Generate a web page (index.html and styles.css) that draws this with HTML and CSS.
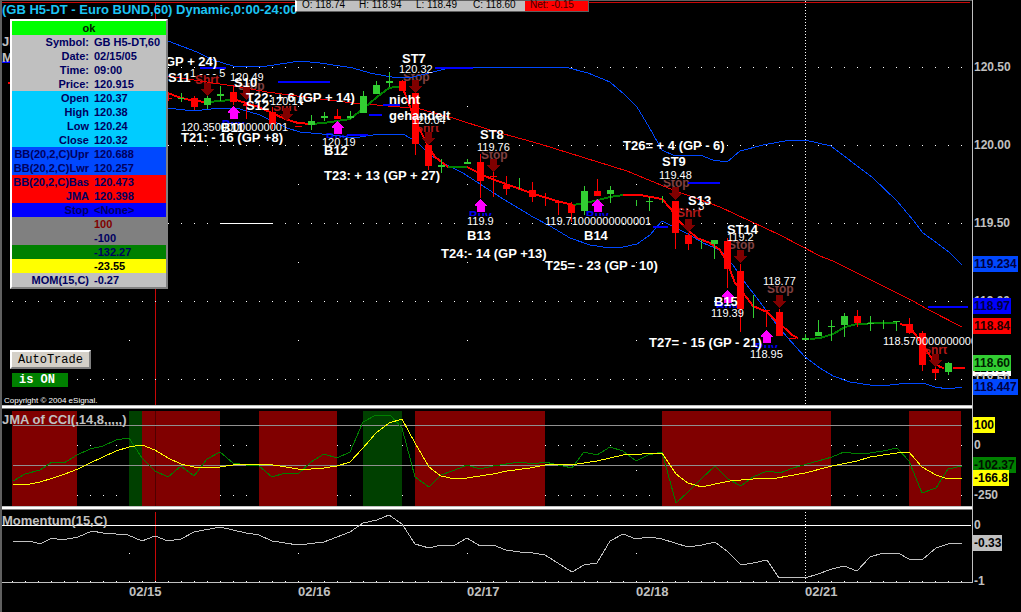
FILE: index.html
```html
<!DOCTYPE html>
<html lang="en">

<head>
    <meta charset="UTF-8">
    <meta name="viewport" content="width=device-width, initial-scale=1.0">
    <title>GB H5-DT - Euro BUND, 60</title>
    <link rel="stylesheet" href="styles.css">
</head>

<body>
    <main class="workspace">
        <section class="pane price-pane">
            <svg class="plot" viewBox="2 0 970 405">
                <path class="top-edge" d="M2 0.5H972" />
                <path class="cross" d="M2 2.5H970M155.5 2V405" />
                <path class="session" d="M805.5 1V405" />
                <path class="dots" d="M12 67.5H972M12 145.5H972M12 223.5H972M12 301.5H972M12 379.5H972" />
                <path class="day-dots" d="M298 106.5H806M298 184.5H806M298 262.5H806M129 340.5H806" />

                <g id="signals"></g>

                <path class="line band" d="M168 41L197 52L213 60L233 66L267 66L300 61L320 63L340 66L353 68L370 73L397 78L413 77L433 72L453 67L473 67L565 67L588 73L610 82L625 95L637 107L649 127L662 150L675 156L700 155L713 160L727 162L740 151L763 145L790 140L805 140L831 146L848 159L872 177L897 201L913 220L923 233L937 243L950 253L962 265" />
                <path class="line band" d="M168 108L193 111L220 108L240 109L260 115L287 128L300 132L333 135L353 138L373 135L403 134L417 142L430 155L447 165L463 173L480 184L500 197L533 217L550 226L570 238L590 245L610 248L623 247L637 244L650 235L662 221L670 225L688 234L703 243L720 250L733 265L743 280L760 302L773 320L787 337L805 357L820 368L833 376L850 382L870 385L890 385L908 383L923 383L935 387L948 389L962 387" />
                <path class="line basis" d="M168 76L200 81L240 87L267 92L320 99L353 103L400 107L420 109L453 118L493 131L540 144L627 171L673 190L720 207L780 235L820 256L833 261L913 301L927 309L962 327" />
                <path class="stop-line" d="M200 67.5H226M278 81.5H330M383 104.5H400M369 114.5H382M435 67.5H473M347 134.5H368M653 226.5H668M688 182.5H720M928 306.5H968M2 61.5H10" />
                <path class="white-line" d="M220 223.5H273" />

                <path class="jma down" d="M168 93L178 97L194 101L207 102M233 99L246 103L259 107L285 119L298 123L311 124M402 86L415 120L428 146L435 157L448 167M467 167L477 172L487 177L503 183L520 189L537 195L557 201L573 205M623 195L640 195L662 199L671 209L678 220L688 230L697 238L710 243L720 250L727 262L735 283L747 298L753 306L767 312L777 322L787 330L792 335L798 338M900 324L909 326L918 338L926 350L935 363L940 367L944 368M953 368H962M8 83H10" />
                <path class="jma up" d="M207 102L222 101L233 99M311 124L324 123L337 121L350 119L363 109L377 97L389 88L402 86M448 167H467M573 205L590 202L610 197L623 195M810 339L820 338L833 334L845 327L857 324L879 323L896 323" />

                <g id="candles"></g>
                <g id="arrows"></g>

                <g class="quote">
                    <text x="181" y="131">120.35000000000001</text>
                    <text x="190" y="77">1 - - - 5</text>
                    <text x="230" y="81">120.49</text>
                    <text x="270" y="105">120.14</text>
                    <text x="322" y="146">120.19</text>
                    <text x="399" y="73">120.32</text>
                    <text x="412" y="124">120.04</text>
                    <text x="477" y="151">119.76</text>
                    <text x="467" y="225">119.9</text>
                    <text x="545" y="225">119.71000000000001</text>
                    <text x="659" y="179">119.48</text>
                    <text x="680" y="210">. . . 3</text>
                    <text x="727" y="241">119.2</text>
                    <text x="711" y="317">119.39</text>
                    <text x="763" y="285">118.77</text>
                    <text x="750" y="358">118.95</text>
                    <text x="883" y="345">118.57000000000001</text>
                </g>

                <g class="label">
                    <text class="study" x="2" y="46">JMA</text>
                    <text class="study" x="2" y="62">MOM</text>
                    <text x="165" y="66">GP + 24)</text>
                    <text x="168" y="82">S11</text>
                    <text x="234" y="87">S10</text>
                    <text x="246" y="102">T22: + 6 (GP + 14)</text>
                    <text x="246" y="110">S12</text>
                    <text x="221" y="132">B11</text>
                    <text x="181" y="142">T21: - 16 (GP +8)</text>
                    <text x="324" y="155">B12</text>
                    <text x="324" y="180">T23: + 13 (GP + 27)</text>
                    <text x="402" y="63">ST7</text>
                    <text x="389" y="104">nicht</text>
                    <text x="389" y="120">gehandelt</text>
                    <text x="480" y="139">ST8</text>
                    <text x="467" y="240">B13</text>
                    <text x="441" y="258">T24:- 14 (GP +13)</text>
                    <text x="545" y="270">T25= - 23 (GP - 10)</text>
                    <text x="584" y="240">B14</text>
                    <text x="623" y="150">T26= + 4 (GP - 6)</text>
                    <text x="662" y="166">ST9</text>
                    <text x="688" y="205">S13</text>
                    <text x="727" y="234">ST14</text>
                    <text x="714" y="306">B15</text>
                    <text x="649" y="347">T27= - 15 (GP - 21)</text>
                </g>
                <text class="title" x="2" y="14">(GB H5-DT - Euro BUND,60) Dynamic,0:00-24:00</text>
                <text class="copyright" x="4" y="403">Copyright © 2004 eSignal.</text>
            </svg>

            <div class="axis" style="--height: 405">
                <span class="tick" style="--y: 67">120.50</span>
                <span class="tick" style="--y: 145">120.00</span>
                <span class="tick" style="--y: 223">119.50</span>
                <span class="tick" style="--y: 301">119.00</span>
                <span class="tick mark-white" style="--y: 368">118.57</span>
                <span class="tick" style="--y: 379">118.50</span>
                <span class="tick mark-band" style="--y: 264">119.234</span>
                <span class="tick mark-stop" style="--y: 306">118.97</span>
                <span class="tick mark-red" style="--y: 326">118.84</span>
                <span class="tick mark-last" style="--y: 363">118.60</span>
                <span class="tick mark-band" style="--y: 387">118.447</span>
            </div>

            <div class="ohlc">
                <span>O: 118.74</span>
                <span>H: 118.94</span>
                <span>L: 118.49</span>
                <span>C: 118.60</span>
                <span class="net">Net: -0.15</span>
            </div>

            <table class="cursor-window">
                <thead>
                    <tr><th colspan="2">ok</th></tr>
                </thead>
                <tbody>
                    <tr><th>Symbol:</th><td>GB H5-DT,60</td></tr>
                    <tr><th>Date:</th><td>02/15/05</td></tr>
                    <tr><th>Time:</th><td>09:00</td></tr>
                    <tr><th>Price:</th><td>120.915</td></tr>
                    <tr class="cyan"><th>Open</th><td>120.37</td></tr>
                    <tr class="cyan"><th>High</th><td>120.38</td></tr>
                    <tr class="cyan"><th>Low</th><td>120.24</td></tr>
                    <tr class="cyan"><th>Close</th><td>120.32</td></tr>
                    <tr class="band-row"><th>BB(20,2,C)Upr</th><td>120.688</td></tr>
                    <tr class="band-row"><th>BB(20,2,C)Lwr</th><td>120.257</td></tr>
                    <tr class="red"><th>BB(20,2,C)Bas</th><td>120.473</td></tr>
                    <tr class="red"><th>JMA</th><td>120.398</td></tr>
                    <tr class="blue"><th>Stop</th><td>&lt;None&gt;</td></tr>
                    <tr class="gray"><th></th><td class="maroon">100</td></tr>
                    <tr class="gray"><th></th><td>-100</td></tr>
                    <tr class="green"><th></th><td>-132.27</td></tr>
                    <tr class="yellow"><th></th><td>-23.55</td></tr>
                    <tr><th>MOM(15,C)</th><td>-0.27</td></tr>
                </tbody>
            </table>

            <div class="auto-trade">
                <button type="button">AutoTrade</button>
                <span class="state">is ON</span>
            </div>
        </section>

        <div class="splitter"></div>

        <section class="pane">
            <svg class="plot" viewBox="2 409 970 97">
                <path class="dots" d="M12 445.5H972M12 495.5H972" />
                <path class="day-dots" d="M298 470.5H806" />
                <path class="short-zone" d="M12 411H77V506H12ZM142 411H220V506H142ZM259 411H337V506H259ZM415 411H545V506H415ZM662 411H831V506H662ZM909 411H961V506H909Z" />
                <path class="long-zone" d="M129 411H142V506H129ZM363 411H402V506H363Z" />
                <path class="cross-dark" d="M155.5 411V506" />
                <path class="level" d="M13 425.5H962M13 465.5H962" />
                <path class="line cci" d="M13 481L25 474L40 470L52 462L64 463L77 455L90 449L103 446L116 440L129 438L142 458L155 471L168 477L181 466L194 476L207 459L220 452L233 463L246 465L259 466L272 477L285 473L298 474L311 462L324 454L337 458L350 452L363 422L376 415L390 415L402 428L415 477L429 487L441 475L455 470L467 465L480 469L493 466L520 462L533 464L545 462L572 468L584 452L597 455L610 447L623 451L636 461L648 455L662 452L676 503L688 492L702 478L715 466L728 479L741 486L753 477L767 471L780 473L793 468L818 461L832 457L844 452L858 454L870 453L883 451L897 448L909 461L922 493L936 488L948 469L962 466" />
                <path class="line signal" d="M13 484L30 484L40 482L53 478L65 474L78 469L90 463L103 457L116 451L129 447L142 445L155 450L168 458L181 464L194 467L207 468L220 467L233 465L246 464L265 464L280 466L298 469L311 469L324 468L337 466L350 462L363 448L376 433L389 423L402 419L415 443L429 467L441 476L455 479L467 478L493 474L507 471L530 468L545 465L577 464L597 461L623 455L662 453L676 474L688 483L702 487L715 484L730 481L753 479L777 478L805 473L832 466L857 461L870 457L897 453L909 452L922 467L936 475L948 479L962 478" />
                <text class="study" x="2" y="424">JMA of CCI(,14,8,,,,,)</text>
            </svg>
            <div class="axis" style="--height: 97">
                <span class="tick mark-yellow" style="--y: 16">100</span>
                <span class="tick" style="--y: 36">0</span>
                <span class="tick" style="--y: 86">-250</span>
                <span class="tick mark-green" style="--y: 56">-102.37</span>
                <span class="tick mark-yellow" style="--y: 69">-166.8</span>
            </div>
        </section>

        <div class="splitter"></div>

        <section class="pane">
            <svg class="plot" viewBox="2 510 970 73">
                <path class="cross" d="M155.5 512V583" />
                <path class="session" d="M805.5 512V583" />
                <path class="day-dots" d="M129 553.5H806" />
                <path class="white-line" d="M2 525.5H971" />
                <path class="line momentum" d="M13 541L30 541L40 544L52 538L62 540L78 537L92 531L103 533L128 535L142 541L155 536L168 541L181 539L194 532L220 527L246 533L259 535L272 541L298 545L324 542L350 532L363 523L377 520L389 515L402 524L415 544L429 548L441 545L455 545L467 538L480 546L493 545L506 550L520 552L533 553L545 555L572 572L584 565L597 563L610 541L623 534L636 539L649 537L662 539L688 547L702 545L715 542L728 552L741 565L753 563L767 560L779 578L793 577L805 578L818 574L832 569L844 566L857 571L870 557L883 553L898 553L909 559L922 560L936 548L948 544L962 543" />
                <path class="axis-ticks" d="M12 581.5H972" />
                <path class="axis-line" d="M2 582.5H972" />
                <text class="study" x="2" y="525">Momentum(15,C)</text>
            </svg>
            <div class="axis" style="--height: 73">
                <span class="tick" style="--y: 15">0</span>
                <span class="tick" style="--y: 71">-1</span>
                <span class="tick mark-silver" style="--y: 33">-0.33</span>
            </div>
        </section>

        <footer class="dates">
            <span></span>
            <span>02/15</span>
            <span>02/16</span>
            <span>02/17</span>
            <span>02/18</span>
            <span>02/21</span>
        </footer>
    </main>

    <script>
        // x, high, body top, body bottom, low, direction
        const candles = [
            [168, 94, 98, 99, 101, 'down'], [181, 93, 98, 99, 102, 'up'], [194, 96, 98, 107, 110, 'down'],
            [207, 92, 98, 105, 109, 'up'], [220, 86, 94, 96, 101, 'up'], [233, 85, 92, 102, 105, 'down'],
            [246, 104, 104, 106, 119, 'down'], [272, 107, 112, 124, 129, 'down'], [298, 126, 126, 127, 127, 'down'],
            [311, 115, 121, 125, 130, 'up'], [324, 112, 116, 118, 121, 'up'], [337, 109, 116, 119, 119, 'down'],
            [350, 111, 116, 118, 119, 'up'], [363, 91, 96, 113, 113, 'up'], [376, 81, 85, 94, 94, 'up'],
            [389, 72, 81, 83, 87, 'up'], [402, 80, 81, 91, 91, 'down'], [415, 91, 93, 144, 155, 'down'],
            [428, 145, 145, 166, 170, 'down'], [441, 159, 165, 167, 173, 'up'], [467, 159, 162, 164, 164, 'up'],
            [480, 154, 162, 181, 198, 'down'], [493, 172, 176, 177, 197, 'down'], [506, 176, 185, 189, 195, 'down'],
            [519, 178, 189, 189, 189, 'up'], [532, 182, 190, 197, 202, 'down'], [545, 193, 197, 198, 206, 'down'],
            [558, 201, 201, 203, 215, 'down'], [571, 202, 205, 213, 222, 'down'], [584, 186, 191, 211, 215, 'up'],
            [597, 179, 191, 196, 196, 'down'], [610, 186, 190, 194, 203, 'up'], [636, 200, 204, 204, 206, 'up'],
            [649, 197, 201, 202, 211, 'up'], [662, 196, 200, 200, 203, 'up'], [675, 201, 201, 233, 249, 'down'],
            [688, 233, 235, 244, 250, 'down'], [701, 240, 242, 242, 249, 'up'], [714, 240, 240, 244, 259, 'up'],
            [727, 238, 241, 269, 288, 'down'], [740, 264, 271, 309, 332, 'down'], [753, 295, 300, 300, 318, 'up'],
            [766, 310, 310, 311, 327, 'down'], [779, 309, 312, 336, 336, 'down'], [792, 338, 338, 339, 339, 'down'],
            [805, 334, 338, 340, 340, 'up'], [818, 320, 332, 336, 336, 'up'], [831, 320, 326, 327, 341, 'up'],
            [844, 313, 316, 325, 337, 'up'], [857, 310, 316, 323, 327, 'down'], [870, 316, 323, 324, 331, 'up'],
            [883, 320, 322, 322, 329, 'up'], [896, 321, 321, 322, 331, 'up'], [909, 318, 324, 333, 334, 'down'],
            [922, 331, 333, 365, 371, 'down'], [935, 363, 369, 373, 379, 'down'], [948, 362, 363, 372, 375, 'up'],
            [961, 367, 367, 369, 369, 'down']
        ];

        // x, y of the tip or the tail top
        const buys = [[233, 106], [337, 121], [480, 199], [597, 199], [727, 290], [766, 330]];
        const sells = [
            [207, 83], [246, 87], [286, 108], [415, 80], [428, 132], [493, 159],
            [675, 187], [688, 219], [740, 250], [779, 295], [935, 354]
        ];

        // text, kind, x, baseline, then y and height of the strip the price label blanks out
        const signals = [
            ['Shrt', 'shrt', 195, 84, 60, 1], ['Stop', 'stop', 238, 90, 75, 8], ['Shrt', 'shrt', 273, 111, 96, 10],
            ['Stop', 'stop', 403, 81, 66, 8], ['Shrt', 'shrt', 415, 132, 117, 9], ['Stop', 'stop', 481, 159, 144, 8],
            ['Stop', 'stop', 663, 187, 172, 8], ['Shrt', 'shrt', 677, 217, 200, 5], ['Stop', 'stop', 728, 249, 233, 8],
            ['Stop', 'stop', 767, 293, 278, 8], ['Shrt', 'shrt', 923, 354, 338, 9],
            ['Buy', 'buy', 222, 129, 124, 8], ['Buy', 'buy', 326, 142, 138, 8], ['Buy', 'buy', 469, 220, 216, 9],
            ['Buy', 'buy', 586, 220, 216, 9], ['Buy', 'buy', 716, 311, 308, 9], ['Buy', 'buy', 755, 352, 348, 9]
        ];

        document.getElementById('candles').innerHTML = candles.map(([x, high, top, bottom, low, dir]) => `
            <path class="${dir}" d="M${x} ${high}h1V${low}h-1Z" />
            ${bottom > top ? `<path class="${dir}" d="M${x - 3} ${top}h7V${bottom}h-7Z" />` : ''}`).join('');

        document.getElementById('arrows').innerHTML =
            buys.map(([x, y]) => `<path class="buy-arrow" d="M${x + 0.5} ${y}l6 6v1h-2v6h-8v-6h-2v-1Z" />`).join('') +
            sells.map(([x, y]) => `<path class="sell-arrow" d="M${x - 3} ${y}h7v6h3v1l-6.500 6l-6.500 -6v-1h3Z" />`).join('');

        document.getElementById('signals').innerHTML = signals.map(([text, kind, x, y, top, height]) => `
            <text class="${kind}" x="${x}" y="${y}">${text}</text>
            <rect x="${x - 2}" y="${top}" width="34" height="${height}" />`).join('');
    </script>
</body>

</html>
```
FILE: styles.css
```css
* {
    box-sizing: border-box;
}

body {
    margin: 0;
    min-height: 100vh;
    background-color: #000;
    color: #c0c0c0;
    font-family: "Liberation Sans", Arial, sans-serif;
    font-size: 13px;
}

.workspace {
    min-height: 100vh;
    border-left: 2px solid #606060;
    overflow: hidden;
}

.pane {
    position: relative;
    display: grid;
    grid-template-columns: minmax(0, 1fr) 49px;
}

.plot {
    display: block;
    width: 100%;
    height: auto;
}

.splitter {
    height: 4px;
    margin-right: 49px;
    border-top: 1px solid #c0c0c0;
    border-bottom: 1px solid #808080;
    background-color: #fff;
    box-shadow: 1px 0 0 #c0c0c0;
}

/* chart lines */
.plot path {
    shape-rendering: crispEdges;
    fill: none;
}

.top-edge { stroke: #606060; }
.cross { stroke: #c80808; }
.cross-dark { stroke: #500000; }
.session { stroke: #fff; stroke-dasharray: 1 2; }
.dots { stroke: #fff; stroke-dasharray: 1 12; }
.day-dots { stroke: #fff; stroke-dasharray: 1 168; }
.line { stroke-width: 1; }
.band { stroke: #0048ff; }
.basis { stroke: #f00000; }
.stop-line { stroke: #00f; stroke-width: 2; }
.white-line { stroke: #fff; }
.jma { stroke-width: 2; }
.jma.down { stroke: #f00; }
.jma.up { stroke: #008000; }
.level { stroke: #909090; }
.cci { stroke: #008000; }
.signal { stroke: #ff0; }
.momentum { stroke: #c0c0c0; }
.axis-line { stroke: #c0c0c0; }
.axis-ticks { stroke: #fff; stroke-dasharray: 1 12; }
.plot .short-zone { fill: #800000; }
.plot .long-zone { fill: #004000; }

#candles .up { fill: #32cd32; }
#candles .down { fill: #f00; }
#arrows .buy-arrow { fill: #f0f; }
#arrows .sell-arrow { fill: #800000; }

/* chart texts */
.label text,
.title,
.study {
    font-size: 13px;
    font-weight: bold;
    fill: #fff;
}

.title { fill: #1cc4f4; }
.plot .study { fill: #c0c0c0; }

.quote text {
    font-size: 11px;
    fill: #fff;
}

.copyright {
    font-size: 8px;
    fill: #fff;
}

#signals text {
    font-size: 12px;
    font-weight: bold;
}

#signals .stop { fill: #804040; }
#signals .shrt { fill: #b01818; }
#signals .buy { fill: #0000f0; }

/* price scale */
.axis {
    position: relative;
    border-left: 1px solid #c0c0c0;
}

.tick {
    position: absolute;
    left: 0;
    top: calc(var(--y) / var(--height) * 100%);
    padding: 0 1px;
    transform: translateY(-50%);
    font-size: 12px;
    font-weight: bold;
    line-height: 16px;
}

.mark-band { background-color: #0048ff; color: #000040; }
.mark-stop { background-color: #00f; color: #000040; }
.mark-red { background-color: #f00; color: #200000; }
.mark-last { background-color: #32cd32; color: #002000; }
.mark-white { background-color: #fff; color: #000; }
.mark-yellow { background-color: #ff0; color: #000; }
.mark-green { background-color: #008000; color: #001000; }
.mark-silver { background-color: #c0c0c0; color: #000; }

.dates {
    display: grid;
    grid-template-columns: 127fr repeat(4, 169fr) 167fr;
    margin-right: 49px;
    font-weight: bold;
    line-height: 18px;
}

/* windows over the chart */
.ohlc {
    position: absolute;
    left: 293px;
    top: 0;
    display: flex;
    height: 12px;
    border: 1px solid #606060;
    border-left: 2px solid #fff;
    background-color: #c0c0c0;
    color: #000;
    font-size: 10px;
    line-height: 8px;
}

.ohlc span {
    width: 57px;
    padding-left: 5px;
}

.ohlc .net {
    width: 63px;
    background-color: #f00;
    color: #400000;
}

.cursor-window {
    position: absolute;
    left: 8px;
    top: 19px;
    width: 158px;
    border: 2px solid #808080;
    border-top-color: #fff;
    border-left-color: #fff;
    border-spacing: 0;
    background-color: #c0c0c0;
    color: #000060;
    font-size: 11px;
    font-weight: bold;
    line-height: 14px;
    table-layout: fixed;
}

.cursor-window th,
.cursor-window td {
    height: 14px;
    padding: 0;
    white-space: nowrap;
}

.cursor-window thead th {
    background-color: #0f0;
    color: #002000;
}

.cursor-window tbody th {
    text-align: right;
}

.cursor-window td {
    padding-left: 5px;
}

.cyan { background-color: #00ccff; }
.band-row { background-color: #0048ff; }
.red { background-color: #f00; }
.blue { background-color: #00f; }
.gray { background-color: #808080; }
.green { background-color: #008000; }
.yellow { background-color: #ff0; }
.cursor-window .maroon { color: #800000; }
.yellow td { color: #000; }

.auto-trade {
    position: absolute;
    left: 8px;
    bottom: 18px;
    display: flex;
    flex-direction: column;
    gap: 4px;
    font-family: "Liberation Mono", "Courier New", monospace;
    font-size: 12px;
}

.auto-trade button {
    width: 81px;
    height: 19px;
    padding: 0;
    border: 2px solid #808080;
    border-top-color: #fff;
    border-left-color: #fff;
    background-color: #d4d0c8;
    color: #000;
    font: inherit;
    line-height: 14px;
}

.state {
    width: 56px;
    margin-left: 2px;
    padding-left: 7px;
    background-color: #008000;
    color: #fff;
    font-weight: bold;
    line-height: 14px;
}
```
